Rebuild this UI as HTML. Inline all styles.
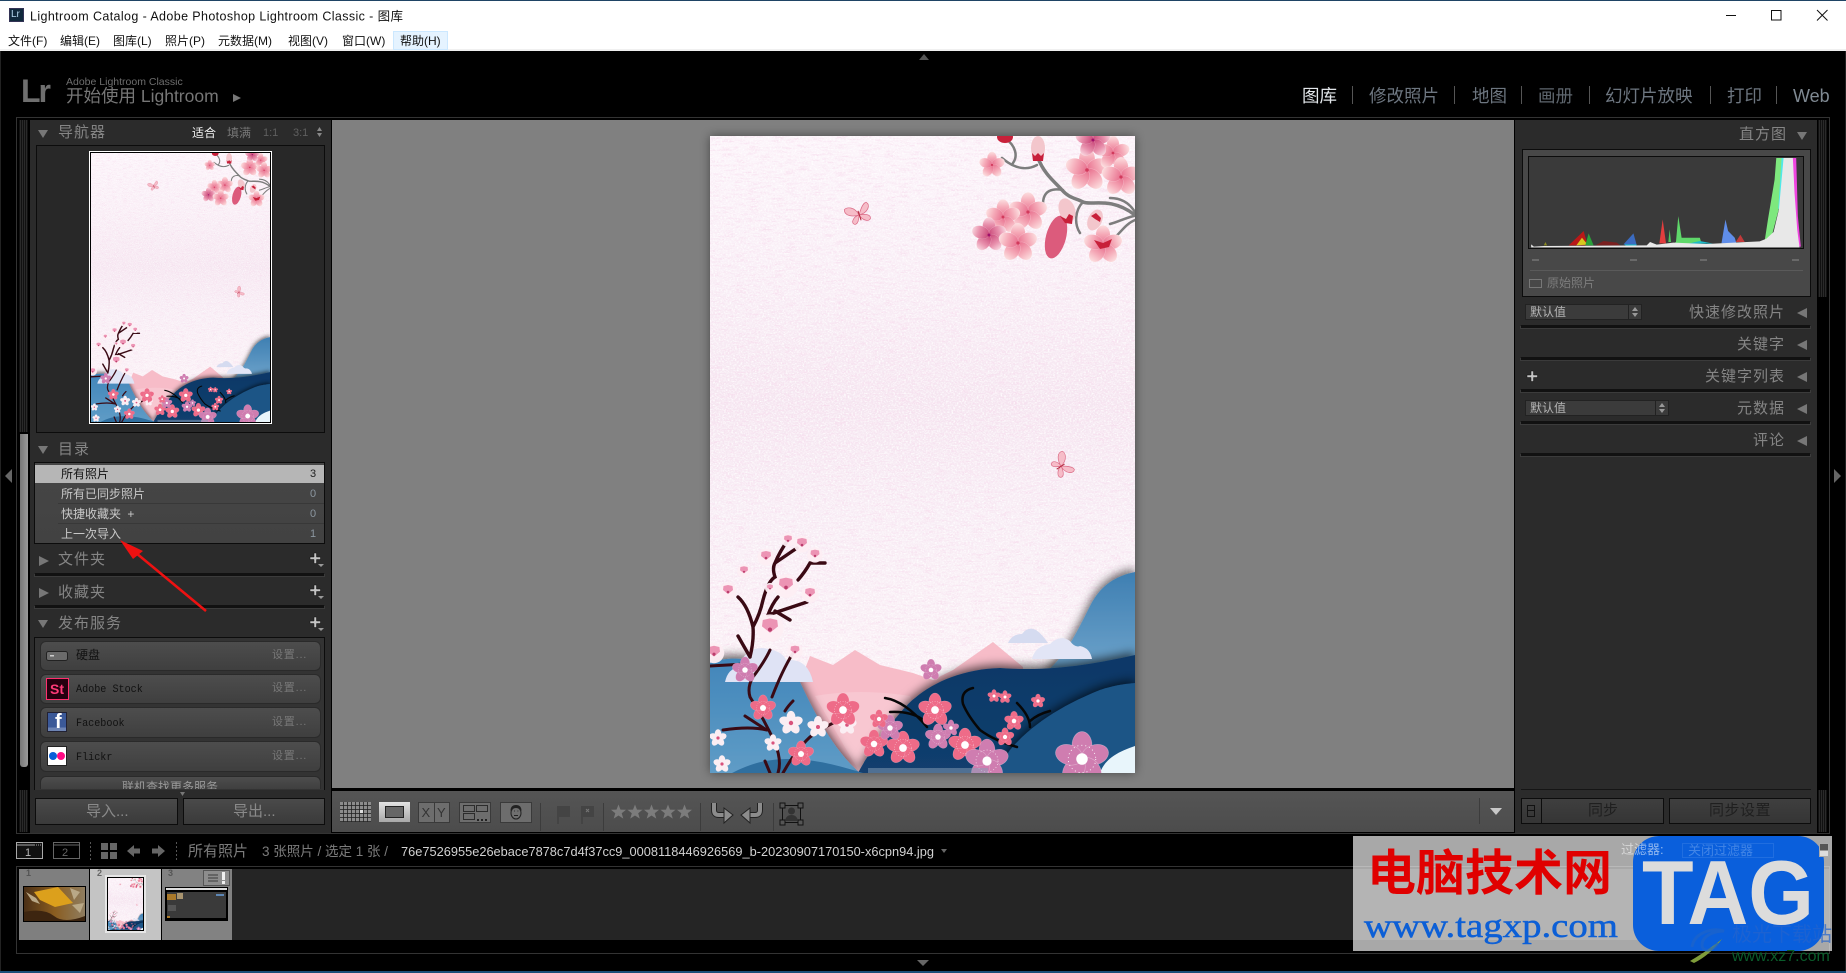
<!DOCTYPE html>
<html lang="zh"><head><meta charset="utf-8"><title>Lightroom Catalog</title>
<style>
*{box-sizing:border-box}
html,body{margin:0;padding:0;background:#000;width:1846px;height:973px;overflow:hidden}
body{position:relative;font-family:"Liberation Sans","Noto Sans CJK SC",sans-serif}
.b,.t{position:absolute}
.t{white-space:nowrap;line-height:1}
.btn{position:absolute;left:40px;width:281px;border:1px solid #2a2a2a;border-radius:6px;background:linear-gradient(#4d4d4d,#3f3f3f)}
.sep{position:absolute;height:4px;background:#111;border:1px solid #3b3b3b;border-top-color:#111}
.m{font-size:12px;color:#111;top:35px}
.nav{top:88px;font-size:17.5px;color:#6d7680}
.bar{position:absolute;top:86px;width:1px;height:18px;background:#555}
.h{font-size:15px;color:#858585;letter-spacing:1px}
.set{font-size:11px;color:#787878;left:272px;letter-spacing:.8px}
.mono{font-family:"Liberation Mono","Noto Sans CJK SC",monospace;font-size:11px;color:#111;left:76px;transform:scaleX(.92);transform-origin:0 0}
.sel{position:absolute;left:1525px;height:16px;background:#3b3b3b;border:1px solid #222}
</style></head><body>

<!-- title bar -->
<div class="b" style="left:0;top:0;width:1846px;height:51px;background:#fff;border-top:1px solid #1f4465"></div>
<div class="b" style="left:0;top:49px;width:1846px;height:2px;background:#f0f0f0"></div>
<div class="b" style="left:9px;top:8px;width:15px;height:14px;background:#10293c;border:1px solid #335"></div>
<div class="t" style="left:11px;top:10px;font-size:10px;color:#b4d7ee">Lr</div>
<svg class="b" style="left:30px;top:6px" width="380" height="20"><text x="0" y="14.5" font-size="12.5" fill="#111" textLength="373" lengthAdjust="spacing" font-family="Liberation Sans,Noto Sans CJK SC,sans-serif">Lightroom Catalog - Adobe Photoshop Lightroom Classic - 图库</text></svg>
<div class="b" style="left:393px;top:31px;width:55px;height:19px;background:#e5f3ff;border:1px solid #cce8ff"></div>
<div class="t m" style="left:8px">文件(F)</div>
<div class="t m" style="left:60px">编辑(E)</div>
<div class="t m" style="left:113px">图库(L)</div>
<div class="t m" style="left:165px">照片(P)</div>
<div class="t m" style="left:218px">元数据(M)</div>
<div class="t m" style="left:288px">视图(V)</div>
<div class="t m" style="left:342px">窗口(W)</div>
<div class="t m" style="left:400px">帮助(H)</div>

<!-- identity plate -->
<div class="t" style="left:21px;top:75px;font-size:32px;font-weight:bold;color:#6f6f6f;letter-spacing:-2px">Lr</div>
<div class="t" style="left:66px;top:77px;font-size:10.5px;color:#6e6e6e">Adobe Lightroom Classic</div>
<div class="t" style="left:66px;top:88px;font-size:17.5px;color:#767676">开始使用 Lightroom</div>

<div class="t nav" style="left:1302px;color:#e2e6ea">图库</div><div class="bar" style="left:1352px"></div>
<div class="t nav" style="left:1369px">修改照片</div><div class="bar" style="left:1454px"></div>
<div class="t nav" style="left:1472px">地图</div><div class="bar" style="left:1521px"></div>
<div class="t nav" style="left:1538px;color:#5f676f">画册</div><div class="bar" style="left:1589px"></div>
<div class="t nav" style="left:1605px">幻灯片放映</div><div class="bar" style="left:1710px"></div>
<div class="t nav" style="left:1727px">打印</div><div class="bar" style="left:1776px"></div>
<div class="t nav" style="left:1793px;font-size:18px;top:87px;color:#7f8992">Web</div>

<!-- frames -->
<div class="b" style="left:16px;top:117px;width:1814px;height:717px;border:1px solid #333"></div>
<div class="b" style="left:19px;top:120px;width:9px;height:312px;background:repeating-linear-gradient(90deg,#111 0 1px,#2a2a2a 1px 2px)"></div>
<div class="b" style="left:20px;top:434px;width:8px;height:333px;background:linear-gradient(90deg,#777,#9a9a9a);border-radius:0 0 3px 3px"></div>
<div class="b" style="left:19px;top:790px;width:9px;height:42px;background:repeating-linear-gradient(90deg,#111 0 1px,#2a2a2a 1px 2px)"></div>
<div class="b" style="left:1818px;top:120px;width:9px;height:177px;background:repeating-linear-gradient(90deg,#111 0 1px,#2a2a2a 1px 2px)"></div>
<div class="b" style="left:1818px;top:790px;width:9px;height:42px;background:repeating-linear-gradient(90deg,#111 0 1px,#2a2a2a 1px 2px)"></div>

<!-- left panel -->
<div class="b" style="left:30px;top:120px;width:301px;height:713px;background:#2b2b2b"></div>
<div class="t h" style="left:58px;top:125px">导航器</div>
<div class="t" style="left:192px;top:127px;font-size:12px;color:#f2f2f2">适合</div>
<div class="t" style="left:227px;top:127px;font-size:12px;color:#777">填满</div>
<div class="t" style="left:263px;top:128px;font-size:11px;color:#5f5f5f">1:1</div>
<div class="t" style="left:293px;top:128px;font-size:11px;color:#5f5f5f">3:1</div>
<div class="b" style="left:36px;top:145px;width:289px;height:288px;background:#282828;border:1px solid #0c0c0c"></div>

<div class="t h" style="left:58px;top:442px">目录</div>
<div class="b" style="left:34px;top:462px;width:291px;height:82px;background:linear-gradient(#464646,#424242);border:1px solid #0c0c0c"></div>
<div class="b" style="left:35px;top:465px;width:289px;height:18px;background:#b6b6b6"></div>
<div class="b" style="left:58px;top:503px;width:266px;height:1px;background:#383838"></div>
<div class="b" style="left:58px;top:523px;width:266px;height:1px;background:#383838"></div>
<div class="t" style="left:61px;top:468px;font-size:12px;color:#111">所有照片</div>
<div class="t" style="left:61px;top:488px;font-size:12px;color:#c9c9c9">所有已同步照片</div>
<div class="t" style="left:61px;top:508px;font-size:12px;color:#c9c9c9">快捷收藏夹 <span style="margin-left:3px">+</span></div>
<div class="t" style="left:61px;top:528px;font-size:12px;color:#c9c9c9">上一次导入</div>
<div class="t" style="left:310px;top:469px;font-size:11px;color:#222">3</div>
<div class="t" style="left:310px;top:489px;font-size:11px;color:#8b96a0">0</div>
<div class="t" style="left:310px;top:509px;font-size:11px;color:#8b96a0">0</div>
<div class="t" style="left:310px;top:529px;font-size:11px;color:#8b96a0">1</div>

<div class="t h" style="left:58px;top:552px">文件夹</div>
<div class="sep" style="left:34px;top:573px;width:291px"></div>
<div class="t h" style="left:58px;top:585px">收藏夹</div>
<div class="sep" style="left:34px;top:605px;width:291px"></div>
<div class="t h" style="left:58px;top:616px">发布服务</div>

<div class="b" style="left:34px;top:637px;width:291px;height:153px;background:#333;border:1px solid #0c0c0c;border-bottom:0"></div>
<div class="btn" style="top:641px;height:30px"></div>
<div class="btn" style="top:674px;height:30px"></div>
<div class="btn" style="top:707px;height:31px"></div>
<div class="btn" style="top:741px;height:31px"></div>
<div class="btn" style="top:776px;height:13px;border-bottom:0;border-radius:6px 6px 0 0"></div>
<div class="t" style="left:76px;top:649px;font-size:12px;color:#111">硬盘</div>
<div class="t mono" style="top:685px">Adobe Stock</div>
<div class="t mono" style="top:719px">Facebook</div>
<div class="t mono" style="top:753px">Flickr</div>
<div class="t set" style="top:650px">设置...</div>
<div class="t set" style="top:683px">设置...</div>
<div class="t set" style="top:717px">设置...</div>
<div class="t set" style="top:751px">设置...</div>
<div class="b" style="left:46px;top:678px;width:23px;height:22px;background:#26000f;border:1px solid #ff2f6e"></div>
<div class="t" style="left:50px;top:682px;font-size:14px;font-weight:bold;color:#ff3a78">St</div>
<div class="b" style="left:47px;top:712px;width:20px;height:20px;background:linear-gradient(#3b5998 0 80%,#6d84b4 80%);border:1px solid #223"></div>
<div class="t" style="left:55px;top:712px;font-size:20px;font-weight:bold;color:#fff">f</div>
<div class="b" style="left:47px;top:746px;width:20px;height:20px;background:#fff;border:1px solid #222"></div>
<div class="b" style="left:49px;top:752px;width:8px;height:8px;border-radius:50%;background:#0a5fd8"></div>
<div class="b" style="left:57px;top:752px;width:8px;height:8px;border-radius:50%;background:#ff0a84"></div>
<div class="b" style="left:34px;top:776px;width:291px;height:13px;overflow:hidden"><div class="t" style="left:88px;top:5px;font-size:12px;color:#9a9a9a">联机查找更多服务</div></div>
<div class="b" style="left:35px;top:798px;width:143px;height:27px;background:linear-gradient(#4a4a4a,#3a3a3a);border:1px solid #0c0c0c"></div>
<div class="b" style="left:183px;top:798px;width:142px;height:27px;background:linear-gradient(#4a4a4a,#3a3a3a);border:1px solid #0c0c0c"></div>
<div class="t" style="left:86px;top:804px;font-size:15px;color:#8a8a8a">导入...</div>
<div class="t" style="left:233px;top:804px;font-size:15px;color:#8a8a8a">导出...</div>

<!-- centre -->
<div class="b" style="left:332px;top:120px;width:1182px;height:668px;background:#808080"></div>
<div class="b" style="left:332px;top:791px;width:1182px;height:41px;background:linear-gradient(#555,#4c4c4c)"></div>

<!-- right panel -->
<div class="b" style="left:1515px;top:120px;width:302px;height:713px;background:#2b2b2b"></div>
<div class="t h" style="left:1739px;top:127px">直方图</div>
<div class="b" style="left:1522px;top:149px;width:289px;height:148px;background:#484848;border:1px solid #0c0c0c"></div>
<div class="b" style="left:1530px;top:270px;width:273px;height:1px;background:#5a5a5a"></div>
<div class="b" style="left:1529px;top:279px;width:13px;height:9px;border:1px solid #777"></div>
<div class="t" style="left:1547px;top:277px;font-size:12px;color:#7d7d7d">原始照片</div>
<div class="sel" style="top:304px;width:117px"></div><div class="b" style="left:1628px;top:305px;width:1px;height:14px;background:#222"></div>
<div class="t" style="left:1530px;top:306px;font-size:12px;color:#b5b5b5">默认值</div>
<div class="t h" style="left:1689px;top:305px">快速修改照片</div>
<div class="sep" style="left:1520px;top:325px;width:291px"></div>
<div class="t h" style="left:1737px;top:337px">关键字</div>
<div class="sep" style="left:1520px;top:357px;width:291px"></div>
<div class="t h" style="left:1705px;top:369px">关键字列表</div>
<div class="sep" style="left:1520px;top:389px;width:291px"></div>
<div class="sel" style="top:400px;width:144px"></div><div class="b" style="left:1655px;top:401px;width:1px;height:14px;background:#222"></div>
<div class="t" style="left:1530px;top:402px;font-size:12px;color:#b5b5b5">默认值</div>
<div class="t h" style="left:1737px;top:401px">元数据</div>
<div class="sep" style="left:1520px;top:421px;width:291px"></div>
<div class="t h" style="left:1753px;top:433px">评论</div>
<div class="sep" style="left:1520px;top:453px;width:291px"></div>

<div class="b" style="left:1521px;top:789px;width:290px;height:1px;background:#151515"></div>
<div class="b" style="left:1521px;top:798px;width:143px;height:26px;background:linear-gradient(#3f3f3f,#353535);border:1px solid #0c0c0c"></div>
<div class="b" style="left:1541px;top:798px;width:1px;height:26px;background:#0c0c0c"></div>
<div class="b" style="left:1527px;top:805px;width:8px;height:12px;border:1px solid #111"></div>
<div class="b" style="left:1527px;top:810px;width:8px;height:1px;background:#111"></div>
<div class="b" style="left:1669px;top:798px;width:142px;height:26px;background:linear-gradient(#3f3f3f,#353535);border:1px solid #0c0c0c"></div>
<div class="t" style="left:1588px;top:803px;font-size:15px;color:#1f1f1f">同步</div>
<div class="t" style="left:1709px;top:803px;font-size:15px;letter-spacing:.5px;color:#1f1f1f">同步设置</div>

<!-- filmstrip bar -->
<div class="t" style="left:188px;top:844px;font-size:15px;color:#7c7c7c">所有照片</div>
<div class="t" style="left:262px;top:845px;font-size:13.5px;color:#7c7c7c">3 张照片 / 选定 1 张 /</div>
<svg class="b" style="left:401px;top:842px" width="540" height="20"><text x="0" y="14" font-size="13" fill="#d2d2d2" textLength="533" lengthAdjust="spacingAndGlyphs" font-family="Liberation Sans,sans-serif">76e7526955e26ebace7878c7d4f37cc9_0008118446926569_b-20230907170150-x6cpn94.jpg</text></svg>
<div class="b" style="left:16px;top:866px;width:1814px;height:88px;border:1px solid #333"></div>
<div class="b" style="left:232px;top:869px;width:1597px;height:71px;background:#252525"></div>
<div class="b" style="left:19px;top:869px;width:70px;height:71px;background:#7f7f7f"></div>
<div class="b" style="left:90px;top:869px;width:71px;height:71px;background:#c4c4c4"></div>
<div class="b" style="left:162px;top:869px;width:70px;height:71px;background:#828282"></div>
<div class="t" style="left:26px;top:869px;font-size:9px;font-weight:bold;color:#555">1</div>
<div class="t" style="left:97px;top:869px;font-size:9px;font-weight:bold;color:#666">2</div>
<div class="t" style="left:168px;top:869px;font-size:9px;font-weight:bold;color:#555">3</div>

<!-- overlay icons -->
<svg class="b" style="left:0;top:0" width="1846" height="973" viewBox="0 0 1846 973">
<defs>
<linearGradient id="lh" x1="0" y1="0" x2="0" y2="1"><stop offset="0" stop-color="#e2e2e2"/><stop offset="1" stop-color="#a8a8a8"/></linearGradient>
<pattern id="gr" width="4" height="4" patternUnits="userSpaceOnUse" x="340" y="802"><rect width="4" height="4" fill="#222"/><rect width="3.200" height="3.200" fill="#8c8c8c"/></pattern>
<polygon id="s" points="0,-7.5 2,-2.4 7.5,-2.2 3.2,1.2 4.8,6.6 0,3.5 -4.8,6.6 -3.2,1.2 -7.5,-2.2 -2,-2.4"/>
</defs>
<!-- window controls -->
<path d="M1726 15.5h10" stroke="#111" fill="none"/>
<rect x="1771.5" y="10.5" width="9.5" height="9.5" stroke="#111" fill="none"/>
<path d="M1817 10l10.5 10.5M1827.5 10L1817 20.5" stroke="#111" fill="none"/>
<!-- arrows -->
<polygon points="233,94 241,98 233,102" fill="#777"/>
<polygon points="919,60 929,60 924,54" fill="#555"/>
<polygon points="5,476 12,469 12,483" fill="#666"/>
<polygon points="1841,476 1834,469 1834,483" fill="#666"/>
<polygon points="917,960 929,960 923,966" fill="#666"/>
<!-- panel triangles -->
<g fill="#777" transform="translate(0 1)">
<polygon points="38,129 48,129 43,137"/>
<polygon points="38,445 48,445 43,453"/>
<polygon points="39,555 49,560 39,565"/>
<polygon points="39,587 49,592 39,597"/>
<polygon points="38,619 48,619 43,627"/>
<polygon points="1797,131 1807,131 1802,139"/>
<polygon points="1807,307 1797,312 1807,317"/>
<polygon points="1807,339 1797,344 1807,349"/>
<polygon points="1807,371 1797,376 1807,381"/>
<polygon points="1807,403 1797,408 1807,413"/>
<polygon points="1807,435 1797,440 1807,445"/>
</g>
<polygon points="180,792 185,792 182.500,796" fill="#777"/>
<polygon points="317,131 322,131 319.500,127" fill="#888"/><polygon points="317,133 322,133 319.500,137" fill="#888"/>
<polygon points="1632,311 1638,311 1635,307" fill="#999"/><polygon points="1632,313 1638,313 1635,317" fill="#999"/>
<polygon points="1659,407 1665,407 1662,403" fill="#999"/><polygon points="1659,409 1665,409 1662,413" fill="#999"/>
<!-- plus icons -->
<g fill="#c4c4c4" stroke="#111" stroke-width=".5">
<path d="M314 553h2.500v4h4v2.500h-4v4h-2.500v-4h-4v-2.500h4z"/>
<path d="M314 585h2.500v4h4v2.500h-4v4h-2.500v-4h-4v-2.500h4z"/>
<path d="M314 617h2.500v4h4v2.500h-4v4h-2.500v-4h-4v-2.500h4z"/>
<path d="M1531 371h2.500v4h4v2.500h-4v4h-2.500v-4h-4v-2.500h4z"/>
</g>
<polygon points="318,564 324,564 321,567" fill="#999"/><polygon points="318,596 324,596 321,599" fill="#999"/><polygon points="318,628 324,628 321,631" fill="#999"/>
<!-- hdd -->
<rect x="46.500" y="651.500" width="21" height="9" rx="2" fill="#6b6b6b" stroke="#222"/><rect x="50" y="655" width="4" height="1.500" fill="#ccc"/>
<!-- red arrow -->
<path d="M206 611L130 548" stroke="#ee1111" stroke-width="2.500" fill="none"/>
<polygon points="120,540 143,551 133,559" fill="#ee1111"/>
<!-- toolbar -->
<rect x="340" y="802" width="31" height="20" fill="url(#gr)"/><rect x="360" y="810" width="3" height="3" fill="#ddd"/>
<rect x="379" y="802" width="31" height="20" fill="url(#lh)"/><rect x="385.500" y="806.500" width="18" height="11" fill="#666" stroke="#222"/>
<rect x="418.500" y="802.500" width="31" height="20" fill="#6d6d6d" stroke="#3a3a3a"/><path d="M434.500 802v20" stroke="#3a3a3a"/>
<text x="421.500" y="817" font-size="13" fill="#333" font-family="Liberation Sans,sans-serif">X</text><text x="437" y="817" font-size="13" fill="#333" font-family="Liberation Sans,sans-serif">Y</text>
<rect x="459.500" y="802.500" width="31" height="20" fill="#6d6d6d" stroke="#3a3a3a"/>
<path d="M463.500 805.500h11v6h-11zM476.500 805.500h11v6h-11zM463.500 813.500h11v6h-11z" fill="none" stroke="#2c2c2c"/><path d="M477 819h2v2h-2zM481 819h2v2h-2zM485 819h2v2h-2z" fill="#222"/>
<rect x="500.500" y="802.500" width="31" height="20" fill="#6d6d6d" stroke="#3a3a3a"/>
<ellipse cx="516" cy="813" rx="5" ry="6" fill="#6f6f6f" stroke="#222"/><path d="M510.500 811q0-6 5.500-6t5.500 6q-2-3-5.500-3t-5.500 3z" fill="#222"/><path d="M514 811h.8M517.500 811h.8M514 815.500h4" stroke="#222"/>
<path d="M540.500 803v28M603.500 803v28M700.500 803v28M773.500 803v28M1479.500 798v26" stroke="#3c3c3c"/>
<path d="M557 806h13v11h-11v7h-2z" fill="#444"/><path d="M581 806h13v11h-11v7h-2z" fill="#444"/><path d="M586 809l3 3M589 809l-3 3" stroke="#777"/>
<g fill="#7c7c7c"><use href="#s" x="618.500" y="812"/><use href="#s" x="635" y="812"/><use href="#s" x="651.500" y="812"/><use href="#s" x="668" y="812"/><use href="#s" x="684.500" y="812"/></g>
<path d="M714 803v7q0 5 5 5h6" stroke="#222" stroke-width="6" fill="none"/><path d="M714 803v7q0 5 5 5h6" stroke="#8c8c8c" stroke-width="4" fill="none"/><polygon points="724,808 733,815 724,823" fill="#8c8c8c" stroke="#222"/>
<path d="M760 803v7q0 5-5 5h-6" stroke="#222" stroke-width="6" fill="none"/><path d="M760 803v7q0 5-5 5h-6" stroke="#8c8c8c" stroke-width="4" fill="none"/><polygon points="750,808 741,815 750,823" fill="#8c8c8c" stroke="#222"/>
<rect x="782.500" y="805.500" width="18" height="17" fill="none" stroke="#111"/>
<g fill="#555" stroke="#111"><rect x="780" y="803" width="5" height="5"/><rect x="798" y="803" width="5" height="5"/><rect x="780" y="820" width="5" height="5"/><rect x="798" y="820" width="5" height="5"/></g>
<circle cx="791.500" cy="811" r="3.500" fill="#333"/><path d="M785 821q1-6 6.500-6t6.500 6z" fill="#333"/>
<polygon points="1490,808 1502,808 1496,815" fill="#c8c8c8"/>
<!-- filmstrip controls -->
<rect x="16.500" y="842.500" width="26" height="16" fill="#111" stroke="#a8a8a8"/><path d="M17 845h25" stroke="#a8a8a8" stroke-dasharray="18 1 1 1 1 1 1 1"/>
<text x="25" y="856" font-size="11" fill="#bbb" font-family="Liberation Sans,sans-serif">1</text>
<rect x="53.500" y="842.500" width="26" height="16" fill="#000" stroke="#666"/><path d="M54 845h25" stroke="#666"/>
<text x="62" y="856" font-size="11" fill="#666" font-family="Liberation Sans,sans-serif">2</text>
<path d="M90.500 842v18M176.500 842v18" stroke="#555" stroke-dasharray="2 2"/>
<g fill="#666"><rect x="101" y="843" width="7" height="7"/><rect x="110" y="843" width="7" height="7"/><rect x="101" y="852" width="7" height="7"/><rect x="110" y="852" width="7" height="7"/>
<polygon points="127,851 134,845 134,848.500 140,848.500 140,853.500 134,853.500 134,857"/>
<polygon points="165,851 158,845 158,848.500 152,848.500 152,853.500 158,853.500 158,857"/>
<polygon points="941,849 947,849 944,853"/></g>
<!-- thumbs -->
<rect x="23" y="886" width="63" height="36" fill="#000"/>
<linearGradient id="th1" x1="0" y1="0" x2="1" y2="0"><stop offset="0" stop-color="#4a2f16"/><stop offset=".5" stop-color="#8a5d20"/><stop offset="1" stop-color="#8f7d60"/></linearGradient>
<rect x="24" y="887" width="61" height="34" fill="url(#th1)"/>
<polygon points="34,892 58,887 73,903 55,907 40,900" fill="#dca01c"/><path d="M26 892l10 6 4 6-8-3zM70 888l10 4-6 8zM72 905l12-2-4 10z" fill="#b9a887"/><path d="M24 912q20-4 30 4t31 0v5H24z" fill="#3d2510"/>
<rect x="105" y="875" width="41" height="58" fill="#e6e6e6"/><rect x="107" y="877" width="37" height="54" fill="#000"/>
<rect x="165" y="887" width="63" height="34" fill="#000"/><rect x="166" y="888" width="61" height="2" fill="#ddd"/><rect x="166" y="890" width="61" height="2" fill="#000"/><rect x="167" y="892" width="59" height="26" fill="#3a3a3a"/>
<rect x="167" y="894" width="9" height="6" fill="#a9792a"/><rect x="177" y="893" width="6" height="6" fill="#a8946f"/><rect x="216" y="894" width="8" height="2" fill="#5c86b5"/><rect x="168" y="905" width="8" height="6" fill="#555"/><rect x="167" y="916" width="3" height="2" fill="#a9792a"/>
<rect x="203.500" y="870.500" width="26" height="15" fill="#8d8d8d" stroke="#555"/><path d="M208 875h10M208 878h10M208 881h10" stroke="#3a3a3a"/><rect x="222" y="872" width="3" height="8" fill="#f0f0f0"/><rect x="222" y="881" width="3" height="3" fill="#f0f0f0"/>
</svg>

<!-- histogram -->
<svg class="b" style="left:1529px;top:157px;background:#3a3a3a;outline:1px solid #0c0c0c" width="274" height="91" viewBox="88 142 820 274">
<polygon points="205,408 250,365 262,408" fill="#b81818"/><polygon points="228,408 245,385 262,406" fill="#d6c81e"/><polygon points="255,408 265,372 280,408" fill="#2aa13a"/>
<polygon points="130,408 135,398 140,408 200,408" fill="#8a8a20"/><polygon points="285,408 310,395 350,400 360,408" fill="#7a2020"/>
<polygon points="370,405 400,372 410,408" fill="#3b6bc0"/><polygon points="478,402 488,330 498,402" fill="#e23e3e"/><polygon points="505,398 509,360 513,398" fill="#4fc75b"/>
<polygon points="528,398 535,320 545,385 600,385 605,403 520,403" fill="#5fd86a"/><polygon points="665,402 677,330 685,365 705,385 710,402" fill="#5f8de8"/><polygon points="708,398 722,376 735,398" fill="#c23a3a"/><polygon points="565,403 600,395 640,403" fill="#1cbac8"/>
<polygon points="372,405 410,405 405,411 380,411" fill="#18b0c0"/>
<polygon points="795,395 805,330 825,210 830,145 852,145 840,290 815,385" fill="#7ee87e"/>
<polygon points="846,145 853,145 842,290 836,300" fill="#4fe8e8"/>
<polygon points="878,145 890,145 895,320 904,412 892,412 884,250" fill="#f045e0"/>
<polygon points="92,405 100,412 130,410 440,408 450,398 470,406 520,400 620,404 780,396 800,388 822,368 838,300 852,145 880,145 885,250 893,360 900,414 92,414" fill="#e8e8e8"/>
</svg>
<svg class="b" style="left:1529px;top:258px" width="274" height="4"><path d="M3 2h7M101 2h7M171 2h7M263 2h7" stroke="#8a8a8a"/></svg>

<!-- images -->
<svg class="b" style="left:710px;top:136px;filter:drop-shadow(0 0 5px rgba(0,0,0,.45))" width="425" height="637" viewBox="0 0 425 637">
<defs>
<linearGradient id="bg" x1="0" y1="0" x2="0" y2="1"><stop offset="0" stop-color="#fcf4fa"/><stop offset=".22" stop-color="#f9eef6"/><stop offset=".42" stop-color="#f5e5f0"/><stop offset=".6" stop-color="#f8edf5"/><stop offset=".85" stop-color="#fbf1f6"/></linearGradient>
<linearGradient id="hA" x1="0" y1="0" x2="0" y2="1"><stop offset="0" stop-color="#3e7fb2"/><stop offset="1" stop-color="#70a5cc"/></linearGradient>
<linearGradient id="hB" x1="0" y1="0" x2="0" y2="1"><stop offset="0" stop-color="#4286ba"/><stop offset="1" stop-color="#5f9cc6"/></linearGradient>
<linearGradient id="hN" x1="0" y1="0" x2="0" y2="1"><stop offset="0" stop-color="#0c3867"/><stop offset="1" stop-color="#123f6e"/></linearGradient>
<linearGradient id="pg" x1="0" y1="1" x2="0" y2="0"><stop offset="0" stop-color="#e8708e"/><stop offset=".55" stop-color="#f5aab8"/><stop offset="1" stop-color="#fcdfe0"/></linearGradient>
<linearGradient id="pd" x1="0" y1="1" x2="0" y2="0"><stop offset="0" stop-color="#c94778"/><stop offset=".6" stop-color="#e890ac"/><stop offset="1" stop-color="#f8d4de"/></linearGradient>
<filter id="sh" x="-20%" y="-20%" width="140%" height="140%"><feDropShadow dx="0" dy="-3" stdDeviation="5" flood-color="#000" flood-opacity=".65"/></filter>
<filter id="nz" x="0" y="0" width="100%" height="100%"><feTurbulence type="fractalNoise" baseFrequency=".55 .75" numOctaves="3" seed="4"/><feColorMatrix values="0 0 0 0 1  0 0 0 0 1  0 0 0 0 1  1.800 1.800 0 0 -1.600"/></filter>
<filter id="nl" x="0" y="0" width="100%" height="100%"><feTurbulence type="fractalNoise" baseFrequency=".08 .45" numOctaves="3" seed="9"/><feColorMatrix values="0 0 0 0 .93  0 0 0 0 .72  0 0 0 0 .85  2 0 2 0 -1.850"/></filter>
<g id="p"><g stroke="#fff" stroke-opacity=".35" stroke-width=".25"><ellipse cx="0" cy="-5.500" rx="4" ry="5.500"/><ellipse cx="0" cy="-5.500" rx="4" ry="5.500" transform="rotate(72)"/><ellipse cx="0" cy="-5.500" rx="4" ry="5.500" transform="rotate(144)"/><ellipse cx="0" cy="-5.500" rx="4" ry="5.500" transform="rotate(216)"/><ellipse cx="0" cy="-5.500" rx="4" ry="5.500" transform="rotate(288)"/></g></g>
<g id="fp" fill="#ee6b88"><use href="#p"/><circle r="5.500" fill="none" stroke="#fff" stroke-width=".35" stroke-dasharray=".4 1.200"/><circle r="2.500" fill="#fff"/></g>
<g id="fq" fill="#cf7db0"><use href="#p"/><circle r="5.500" fill="none" stroke="#fff" stroke-width=".35" stroke-dasharray=".4 1.200"/><circle r="2.300" fill="#fff"/></g>
<g id="fs" fill="url(#pg)"><use href="#p"/><circle r=".9" fill="#d23a5c"/></g>
<g id="fd" fill="url(#pd)"><use href="#p"/><circle r=".9" fill="#a0106a"/></g>
<g id="fw" fill="#fbeef3"><use href="#p"/><circle r="2" fill="#d9527c"/></g>
<g id="fb"><circle r="8.500" fill="#fdeef3" opacity=".95"/><path d="M-5-1L-4.500-5L0-6L4.500-5L5-1L0 3Z" fill="#ec94b4"/><circle r="1.300" cy="1" fill="#bb3d6c"/></g>
<g id="bf"><path d="M0 0C-4-8 -12-8 -14-5C-14 1-6 2 0 0C-6 2-8 8-4 9C-1 9 0 4 0 0C2-7 4-12 7-12C11-10 9-2 0 0C5-1 11-1 11 3C10 7 3 5 0 0Z" fill="#f6bcc8" stroke="#db6d88" stroke-width=".7"/><path d="M-1-4L2 5" stroke="#b3283e" stroke-width="1"/></g>
<g id="art">
<rect width="425" height="637" fill="url(#bg)"/>
<rect width="425" height="637" filter="url(#nl)" opacity=".7"/>
<rect width="425" height="637" filter="url(#nz)" opacity=".9"/>
<g stroke="#7d7d7d" fill="none" stroke-linecap="round">
<path d="M328 22C334 38 345 46 352 54S365 62 373 66S400 60 425 79" stroke-width="3.500"/>
<path d="M327 29C318 34 306 34 292 22M303 27C308 20 306 10 295 2M353 54C343 52 333 54 333 68M373 66C365 74 364 88 370 97M424 80C415 82 408 86 400 88M425 84C415 88 410 98 400 106M400 62C412 62 420 68 425 76" stroke-width="2.500"/>
</g>
<use href="#fs" transform="translate(377 34) scale(2)"/><use href="#fs" transform="translate(403 17) scale(1.550)"/><use href="#fs" transform="translate(411 41) scale(1.800)"/><use href="#fd" transform="translate(383 4) scale(1.650)"/><use href="#fs" transform="translate(282 29) scale(1.200)"/>
<use href="#fs" transform="translate(318 76) scale(1.800)"/><use href="#fs" transform="translate(293 81) scale(1.600)"/><use href="#fd" transform="translate(279 99) scale(1.600)"/><use href="#fs" transform="translate(308 107) scale(1.800)"/><use href="#fs" transform="translate(393 109) scale(1.800)"/>
<path d="M384 104l9 3 9-4-3 8-9 2z" fill="#c8203a"/>
<ellipse cx="346" cy="101" rx="10" ry="22" transform="rotate(15 346 101)" fill="#dc5b7c"/>
<ellipse cx="328" cy="12" rx="7" ry="12" fill="#f3c6cc"/><path d="M322 17l3 3 3-3 3 3 3-3-1 8h-10z" fill="#c8203a"/>
<ellipse cx="357" cy="74" rx="8" ry="12" transform="rotate(-20 357 74)" fill="#f3c6cc"/><path d="M350 80l6 3 3-5 4 2-1 8-7-1z" fill="#c8203a"/>
<ellipse cx="385" cy="84" rx="7" ry="11" transform="rotate(25 385 84)" fill="#f3c6cc"/><path d="M381 80l5-3 5 5-1 4-5-3z" fill="#c8203a"/>
<ellipse cx="295" cy="1" rx="8" ry="6" fill="#c8203a"/>
<use href="#bf" transform="translate(149 79) scale(1.050)"/><use href="#bf" transform="translate(351 330) rotate(75)"/>

<polygon points="90,546 100,520 123,529 145,514 170,529 203,537 223,544 243,534 283,506 313,531 320,637 90,637" fill="#f7bcc8"/>
<path d="M105 560Q150 552 200 560L215 600L150 637Z" fill="#f9cfd7" opacity=".6"/>
<path d="M337 535C355 520 365 500 380 470C390 450 405 440 425 436V540H337Z" fill="url(#hA)" filter="url(#sh)"/>
<path d="M0 527C30 515 70 530 90 546C103 574 123 614 150 637H0Z" fill="url(#hB)" filter="url(#sh)"/>
<path d="M148 637C165 605 197 567 205 562C225 545 255 533 290 532C340 536 385 528 425 519V637Z" fill="url(#hN)" filter="url(#sh)"/>
<path d="M300 614C320 590 350 570 390 554C405 549 415 548 425 547V637H285Z" fill="#1d5486" filter="url(#sh)"/>
<path d="M22 637C40 628 55 623 80 623C105 623 130 630 153 637Z" fill="#2f6f9f"/>
<path d="M390 637C395 622 410 615 425 610V637Z" fill="#e8f5fb"/>
<path d="M15 546Q18 532 30 531Q33 513 52 512Q72 514 76 524Q98 522 103 546Z" fill="#dfe3f5"/>
<path d="M298 507Q302 498 312 498Q318 490 326 494Q332 498 338 507Z" fill="#d5dbf0"/>
<path d="M322 523Q325 510 340 508Q350 498 360 505Q365 512 370 510Q380 512 382 523Z" fill="#e2e5f6"/>

<g stroke="#3a0a14" fill="none" stroke-linecap="round">
<path d="M40 521Q44 505 43 491Q38 470 28 461M43 491Q50 478 53 464Q58 445 65 441Q62 432 65 427Q70 415 78 404M65 427L87 412M88 444Q95 436 100 427L115 427M58 479Q62 468 68 461M58 479L97 466M65 475L80 484M40 521L28 500" stroke-width="3.400"/>
<path d="M60 514Q55 525 43 541Q37 551 40 561Q55 585 65 607Q72 625 68 637M62 561Q72 535 83 517M57 594Q40 590 13 594M35 580L55 593M73 637Q85 615 100 601Q115 590 130 584M0 530L35 528M75 575Q78 570 83 565M55 625L60 637" stroke-width="3"/>
</g>
<g stroke="#070707" fill="none" stroke-linecap="round" stroke-width="2.500"><path d="M175 562Q195 565 217 591M180 576Q200 575 212 583M263 552Q250 555 253 568Q258 580 270 594Q285 605 307 611M307 567Q320 580 320 591M320 585Q328 578 340 575"/></g>
<use href="#fb" transform="translate(78 404) scale(.8)"/><use href="#fb" transform="translate(92 408) scale(1)"/><use href="#fb" transform="translate(56 421) scale(1)"/><use href="#fb" transform="translate(105 419) scale(.9)"/><use href="#fb" transform="translate(34 435) scale(.8)"/><use href="#fb" transform="translate(18 455) scale(1)"/><use href="#fb" transform="translate(76 450) scale(1.400)"/><use href="#fb" transform="translate(100 458) scale(1)"/><use href="#fb" transform="translate(60 492) scale(1.600)"/><use href="#fb" transform="translate(60 452) scale(.6)"/>
<use href="#fb" transform="translate(4 517) scale(1.200)"/><use href="#fb" transform="translate(85 515) scale(.9)"/>
<use href="#fq" transform="translate(35 534) scale(1.200)"/><use href="#fp" transform="translate(53 572) scale(1.200)"/><use href="#fp" transform="translate(91 618) scale(1.200)"/><use href="#fw" transform="translate(81 587) scale(1.100)"/><use href="#fw" transform="translate(108 591) scale(1)"/><use href="#fw" transform="translate(137 589) scale(.9)"/><use href="#fw" transform="translate(8 602) scale(.8)"/><use href="#fw" transform="translate(63 607) scale(.8)"/><use href="#fw" transform="translate(12 628) scale(.8)"/>
<use href="#fp" transform="translate(133 574) scale(1.550)"/><use href="#fp" transform="translate(225 574) scale(1.550)"/><use href="#fp" transform="translate(193 612) scale(1.550)"/><use href="#fp" transform="translate(255 609) scale(1.550)"/><use href="#fq" transform="translate(277 625) scale(2)"/><use href="#fp" transform="translate(164 608) scale(1.300)"/><use href="#fq" transform="translate(180 592) scale(1.200)"/><use href="#fp" transform="translate(169 583) scale(.85)"/><use href="#fq" transform="translate(228 601) scale(1.200)"/><use href="#fq" transform="translate(241 592) scale(.75)"/><use href="#fq" transform="translate(221 534) scale(1)"/><use href="#fp" transform="translate(284 560) scale(.6)"/><use href="#fp" transform="translate(295 561) scale(.6)"/><use href="#fp" transform="translate(328 565) scale(.65)"/><use href="#fp" transform="translate(304 585) scale(.9)"/><use href="#fp" transform="translate(295 601) scale(.85)"/><use href="#fq" transform="translate(372 623) scale(2.500)"/>
<rect x="158" y="632" width="120" height="5" fill="#8aa0b8" opacity=".5"/>
</g>
</defs>
<use href="#art"/>
</svg>

<div class="b" style="left:89px;top:151px;width:183px;height:273px;background:#fff"></div>
<div class="b" style="left:90px;top:152px;width:181px;height:271px;background:#000"></div>
<svg class="b" style="left:91px;top:153px" width="179" height="269" viewBox="0 0 425 637" preserveAspectRatio="none"><use href="#art"/></svg>
<svg class="b" style="left:108px;top:878px" width="35" height="52" viewBox="0 0 425 637" preserveAspectRatio="none"><use href="#art"/></svg>

<!-- watermark -->
<div class="b" style="left:1353px;top:836px;width:479px;height:115px;background:rgba(255,255,255,.66)"></div>
<div class="t" style="left:1367px;top:845px;font-size:49px;font-weight:bold;color:#e00000;font-family:'Noto Sans CJK SC',sans-serif">电脑技术网</div>
<svg class="b" style="left:1360px;top:905px" width="262" height="45"><text x="4" y="32" font-size="34" stroke="#0c5fd6" stroke-width=".5" fill="#0c5fd6" textLength="254" lengthAdjust="spacingAndGlyphs" font-family="Liberation Serif,serif">www.tagxp.com</text></svg>
<div class="b" style="left:1633px;top:836px;width:191px;height:115px;background:#0a5fdc;border-radius:26px"></div>
<svg class="b" style="left:1633px;top:836px" width="191" height="115"><text x="9" y="88" font-size="91" font-weight="bold" fill="#dcdcdc" textLength="172" lengthAdjust="spacingAndGlyphs" font-family="Liberation Sans,sans-serif">TAG</text></svg>
<div class="t" style="left:1621px;top:843px;font-size:13px;color:rgba(255,255,255,.55)">过滤器:</div>
<div class="b" style="left:1682px;top:843px;width:92px;height:15px;border:1px solid rgba(120,170,240,.2)"></div>
<div class="t" style="left:1688px;top:844px;font-size:13px;color:rgba(150,190,245,.4)">关闭过滤器</div>
<div class="b" style="left:1819px;top:843px;width:10px;height:14px;border:1px solid #aaa;background:linear-gradient(#555 55%,#ddd 55%)"></div>
<div class="t" style="left:1732px;top:925px;font-size:20px;color:rgba(35,100,205,.7)">极光下载站</div>
<div class="t" style="left:1732px;top:949px;font-size:16px;color:#0a5c2b">www.xz7.com</div>
<svg class="b" style="left:1688px;top:925px" width="44" height="40"><path d="M6 38Q22 30 34 14Q22 24 2 36Z" fill="#7f9c3a"/><path d="M4 22C6 8 24 2 36 6C24 6 14 12 14 20S26 26 30 18" fill="none" stroke="rgba(30,100,200,.7)" stroke-width="3"/></svg>

<div class="b" style="left:0;top:971px;width:1846px;height:2px;background:#1a4e78"></div>
<div class="b" style="left:0;top:51px;width:1px;height:920px;background:#222"></div>
<div class="b" style="left:1845px;top:51px;width:1px;height:920px;background:#222"></div>
</body></html>
